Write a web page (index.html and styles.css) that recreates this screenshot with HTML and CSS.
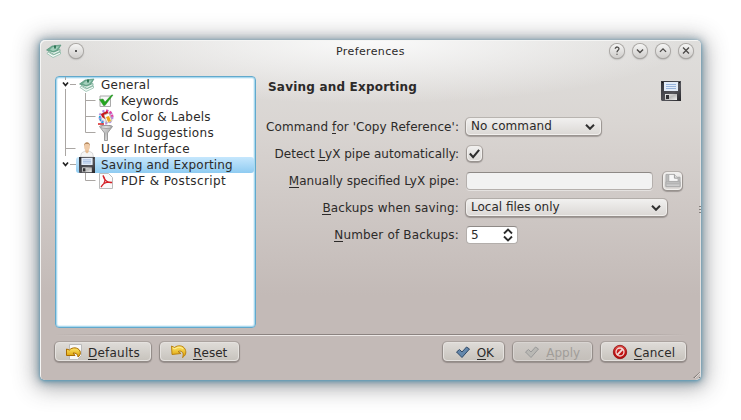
FILE: index.html
```html
<!DOCTYPE html>
<html lang="en">
<head>
<meta charset="utf-8">
<title>Preferences</title>
<link rel="stylesheet" href="styles.css">
</head>
<body>
<svg class="defs" width="0" height="0" aria-hidden="true">
  <defs>
    <linearGradient id="metal" x1="0" y1="0" x2="1" y2="1"><stop offset="0" stop-color="#eee"/><stop offset=".5" stop-color="#bbb"/><stop offset="1" stop-color="#f2f2f2"/></linearGradient>
    <linearGradient id="gold" x1="0" y1="0" x2="0" y2="1"><stop offset="0" stop-color="#ffe66a"/><stop offset="1" stop-color="#d99c00"/></linearGradient>
    <linearGradient id="red" x1="0" y1="0" x2="0" y2="1"><stop offset="0" stop-color="#df5550"/><stop offset=".5" stop-color="#c31414"/><stop offset="1" stop-color="#b50e0e"/></linearGradient>
    <linearGradient id="case" x1="0" y1="0" x2="1" y2="1"><stop offset="0" stop-color="#303036"/><stop offset=".6" stop-color="#55555b"/><stop offset="1" stop-color="#252529"/></linearGradient>
    <symbol id="books" viewBox="0 0 16 16">
      <path d="M1 10.500l6 4 7.500-3.500v-2l-7.500 3-5-3z" fill="#f6fbf8" stroke="#85b8a3" stroke-width=".7"/>
      <path d="M2 8l6 3.500 6-3v-2L8 9 2 6z" fill="#e7f3ed" stroke="#5d9d82" stroke-width=".7"/>
      <path d="M.5 7L6 3l9-1-3 5-5 2z" fill="#6eac91" stroke="#4d8f73" stroke-width=".6"/>
      <path d="M4 6.500L7 4l6-.7-3 3.700-3 1z" fill="#a5d0bd"/><path d="M9 2.500v3" stroke="#17603f" stroke-width="1.500"/>
    </symbol>
    <symbol id="floppy" viewBox="0 0 20 20">
      <path d="M0 0h20v20H1l-1-1z" fill="url(#case)"/>
      <path d="M3 1h14v9H3z" fill="#e3ecf8"/><path d="M5 3.500h10M5 5.500h10M5 7.500h10" stroke="#98b4dc"/>
      <path d="M4 13h12v6H4z" fill="url(#metal)"/><path d="M5 14h3v4H5z" fill="#303034"/><path d="M1 1.500h1M18 1.500h1" stroke="#111"/>
    </symbol>
    <symbol id="tick" viewBox="0 0 16 16"><path d="M1.500 8l3-2.500 2.500 2.500 4.500-5 3 2L7 13.500z" stroke-linejoin="round"/></symbol>
    <symbol id="undo" viewBox="0 0 16 14"><path d="M.5 1l3 1.500C7-.2 12 .3 14 4c2 4 0 7-2.500 8.500C13 9 12 6.500 9 6l-2 .5 3 2-9 1z" fill="url(#gold)" stroke="#b67c08" stroke-width=".9" stroke-linejoin="round"/><path d="M2 3l2 1c3-2.500 6-2 8 0" fill="none" stroke="#fff09a"/></symbol>
    <symbol id="down" viewBox="0 0 10 6"><path d="M1 .8l4 4 4-4" fill="none" stroke="#303030" stroke-width="2"/></symbol>
  </defs>
</svg>

<main class="window">
  <header class="titlebar">
    <svg class="app-icon"><use href="#books"/></svg>
    <span class="orb"><i class="dot"></i></span>
    <h1 class="title"><span class="t-title">Preferences</span></h1>
    <div class="controls">
      <span class="orb"><svg viewBox="0 0 16 16"><path d="M6 5.500c.2-3 4.500-2.500 4.200.2C10 7.300 8 7.200 8 9.500M8 11v1.300"/></svg></span>
      <span class="orb"><svg viewBox="0 0 16 16"><path d="M4.500 6.300L8 9.800l3.500-3.500"/></svg></span>
      <span class="orb"><svg viewBox="0 0 16 16"><path d="M4.500 9L8 5.500 11.500 9"/></svg></span>
      <span class="orb"><svg viewBox="0 0 16 16"><path d="M4.600 4.100l6.800 6.800M11.400 4.100l-6.800 6.800"/></svg></span>
    </div>
  </header>

  <div class="content">
    <nav class="tree">
      <svg class="lines" viewBox="0 0 60 112"><path d="M9.500 0v3M9.500 12v67M14 7.500h6M9.500 71.500h10M29.500 16v39.500h10M29.500 23.500h10M29.500 39.500h10M14 87.500h6M29.500 96v7.500h10"/><path class="arrow" d="M7 5.500l2.500 3 2.500-3M7 85.500l2.500 3 2.500-3"/></svg>
      <div class="node"><svg><use href="#books"/></svg><span class="t-general">General</span></div>
      <div class="node child"><svg viewBox="0 0 16 16"><path d="M2 3h10.500v10.500H2z" fill="#f7f7f7" stroke="#aaa"/><path d="M1.500 6.500L5 6l2 3 6.500-7H15L7 12.500H5.500z" fill="#25a51e" stroke="#2a8d2c" stroke-width=".5"/></svg><span class="t-keywords">Keywords</span></div>
      <div class="node child"><svg viewBox="0 0 16 16"><circle cx="8" cy="8" r="6" fill="#eee" stroke="#b48be0" stroke-width="3" stroke-dasharray="2 2"/><path d="M8 2a6 6 0 0 1 6 6" fill="none" stroke="#e243a1" stroke-width="3" stroke-dasharray="2 1.500"/><path d="M2 7a6 6 0 0 0 4 7" fill="none" stroke="#29a8d8" stroke-width="2" stroke-dasharray="2 1"/><path d="M3 5l6-3 2 3-4 5-3-2z" fill="#c91818"/><path d="M6 6l5-2 3 8-5 2z" fill="#fff" stroke="#b5a996" stroke-width=".7"/><path d="M8 8l3-1 2 5-3 1z" fill="#eea51d"/><path d="M0 15h6" stroke="#d42222" stroke-width="1.500"/></svg><span class="t-color">Color &amp; Labels</span></div>
      <div class="node child"><svg viewBox="0 0 16 16"><path d="M1.500 1.500C2-.2 14-.2 14.500 1.500L9.500 8v7.500h-3V8z" fill="url(#metal)" stroke="#888" stroke-width=".8"/><ellipse cx="8" cy="2" rx="5.500" ry="1.200" fill="#fafafa" stroke="#777" stroke-width=".7"/></svg><span class="t-id">Id Suggestions</span></div>
      <div class="node"><svg viewBox="0 0 16 16"><path d="M1.500 16l1-4 3.500-2h4l3.500 2 1 4z" fill="#f5f5f5" stroke="#ccc" stroke-width=".7"/><path d="M6.300 8h3.400v3L8 12.500 6.300 11z" fill="#e4b98e"/><ellipse cx="8" cy="5.500" rx="2.900" ry="4" fill="#efcba8"/><path d="M5.200 5C4.500 0 11.500 0 10.800 5L9.700 3H6.300z" fill="#b98d62"/></svg><span class="t-user">User Interface</span></div>
      <div class="node selected"><svg><use href="#floppy"/></svg><span class="t-saving">Saving and Exporting</span></div>
      <div class="node child"><svg viewBox="0 0 16 16"><path d="M1.500.5h9l4 4v11h-13z" fill="#fafafa" stroke="#bbb"/><path d="M3 14C7 10.500 8 6 5 2.500 6.500 8 10 10 14 9.500 9 8.500 5 10.500 3 14z" fill="none" stroke="#d41f26" stroke-width="1.300"/></svg><span class="t-pdf">PDF &amp; Postscript</span></div>
    </nav>

    <section class="page">
      <div class="page-head"><h2><span class="t-head">Saving and Exporting</span></h2><svg class="page-icon"><use href="#floppy"/></svg></div>
      <div class="form">
        <label><span class="t-command">Command <u>f</u>or 'Copy Reference':</span></label>
        <div class="combo short"><span class="t-nocommand">No command</span><svg><use href="#down"/></svg></div>
        <label><span class="t-detect">Detect <u>L</u>yX pipe automatically:</span></label>
        <div class="check"><svg viewBox="0 0 14 14"><path d="M2 7l3.500 4L12 3" fill="none" stroke="#2d2d2d" stroke-width="2.200"/></svg></div>
        <label><span class="t-manual"><u>M</u>anually specified LyX pipe:</span></label>
        <div class="path"><div class="field"></div><div class="browse"><svg viewBox="0 0 16 16"><path d="M.5 14.500v-13h3v8h9v-5h3v10z" fill="#bbb" stroke="#aaa"/><path d="M3.500 9V1.500h6l4 4V9z" fill="#f7f7f7" stroke="#aaa"/><path d="M9.500 1.500v4h4" fill="#ddd" stroke="#999"/><path d="M.5 9.500h15v5H.5z" fill="#ccc" stroke="#aaa"/><path d="M1 11.500h14" stroke="#aaa"/></svg></div></div>
        <label><span class="t-backups"><u>B</u>ackups when saving:</span></label>
        <div class="combo long"><span class="t-local">Local files only</span><svg><use href="#down"/></svg></div>
        <label><span class="t-number"><u>N</u>umber of Backups:</span></label>
        <div class="spin"><span>5</span><svg viewBox="0 0 10 14"><path d="M1 5.500L5 1.500 9 5.500M1 8.500L5 12.500 9 8.500" fill="none" stroke="#2d2d2d" stroke-width="1.900"/></svg></div>
      </div>
      <div class="side-grip"></div>
    </section>
  </div>

  <footer class="footer">
    <div class="separator"></div>
    <div class="buttons">
      <div class="button defaults"><svg viewBox="0 0 16 16"><path d="M3.500.5h12v11l-4 4h-8z" fill="#f8f8f8" stroke="#bbb"/><path d="M.5 5l3 1C6 3 12 3 14 7c1 2 0 5-2 6 0-3-2-4-5-4l2 2.500H.5z" fill="url(#gold)" stroke="#a96b00" stroke-linejoin="round"/></svg><span class="t-defaults"><u>D</u>efaults</span></div>
      <div class="button reset"><svg><use href="#undo"/></svg><span class="t-reset"><u>R</u>eset</span></div>
      <div class="button ok"><svg fill="#6387ab" stroke="#2f4966"><use href="#tick"/></svg><span class="t-ok"><u>O</u>K</span></div>
      <div class="button apply"><svg fill="#b9b8b4" stroke="#999"><use href="#tick"/></svg><span class="t-apply"><u>A</u>pply</span></div>
      <div class="button cancel"><svg viewBox="0 0 16 16"><circle cx="8" cy="8" r="6.700" fill="url(#red)" stroke="#910d0d" stroke-width=".8"/><circle cx="8" cy="8" r="4" fill="none" stroke="#f3dcd9" stroke-width="1.300"/><path d="M5.200 10.800l5.600-5.600" stroke="#f3dcd9" stroke-width="1.900"/></svg><span class="t-cancel"><u>C</u>ancel</span></div>
    </div>
    <div class="corner"></div>
  </footer>
</main>
</body>
</html>
```
FILE: styles.css
```css
* { box-sizing: border-box; }
body { margin: 0; padding: 40px; width: 741px; height: 420px; overflow: hidden; background: #fff; color: #2c2a29; font: 12px/16px "DejaVu Sans", sans-serif; }
h1, h2 { margin: 0; font-size: inherit; }
svg { display: block; flex: none; }
.defs { position: absolute; }
.window { position: relative; width: 661px; height: 340px; border-radius: 5px; display: flex; flex-direction: column;
  background: radial-gradient(ellipse 320px 64px at 330px 0, #fafafa, rgba(250,250,250,0)), linear-gradient(#dfdedc 0, #dad6d3 80px, #c3bab7 255px, #c3bab7);
  box-shadow: inset 1px 1px #f5f5f4, inset -1px 0 #e3e0df, 0 1px 3px #5d9cb8, 0 1px 9px 1px rgba(90,130,150,.75), 0 3px 22px 5px rgba(50,50,55,.42); }
.titlebar { height: 36px; display: flex; padding: 3px 7px 0 6px; }
.app-icon { width: 16px; height: 16px; }
.orb { width: 14px; height: 14px; border-radius: 50%; background: linear-gradient(#f5f5f4, #cfcdcb); box-shadow: 0 0 0 1px #aaa7a4, 0 1px 2px #777; display: grid; place-items: center; }
.app-icon + .orb { margin-left: 7px; }
.orb svg { width: 14px; height: 14px; fill: none; stroke: #4b4947; stroke-width: 1.5; }
.dot { width: 2px; height: 2px; background: #555; }
.title { flex: 1; font-size: 11px; font-weight: 400; line-height: 16px; padding: 1px 0 0 253px; }
.controls { display: flex; gap: 9px; padding-right: 1px; }
.titlebar .orb { margin-top: 1px; flex: none; }
.content { display: flex; height: 252px; padding-left: 15px; }
.tree { position: relative; width: 201px; height: 252px; background: #fff; border: 1px solid #62a9cc; border-radius: 4px; box-shadow: inset 0 0 0 1px #a9d9ef, inset 0 0 0 2px #e4f3fa; }
.lines { position: absolute; left: 0; top: 0; width: 60px; height: 112px; z-index: 1; fill: none; stroke: #aaa6a3; }
.lines .arrow { stroke: #222; stroke-width: 1.7; }
.node { height: 16px; margin-left: 20px; margin-right: 1px; padding-left: 3px; display: flex; align-items: center; gap: 6px; white-space: nowrap; }
.node svg { width: 16px; height: 16px; }
.node.child { padding-left: 23px; }
.node.child svg { margin-left: -1px; margin-right: 1px; }
.selected { background: linear-gradient(#c6e7fd, #8fcbf1); border-radius: 3px; }
.page { position: relative; flex: 1; }
.page-head { height: 37px; padding: 3px 20px 0 12px; display: flex; justify-content: space-between; }
.page-icon { width: 20px; height: 20px; margin-top: 2px; }
.form { display: grid; grid-template-columns: 203px 1fr; grid-auto-rows: 27px; column-gap: 6px; align-items: center; }
.form label { text-align: right; white-space: nowrap; }
u { text-decoration: none; border-bottom: 1px solid #2c2a29; display: inline-block; height: 15px; line-height: 16px; vertical-align: top; }
.combo, .button, .browse, .check { border-radius: 4px; border: 1px solid #f1efed; background: linear-gradient(#f0efee, #dcd9d6); box-shadow: 0 0 0 1px rgba(140,134,130,.38), 0 1px 1px 1px rgba(90,84,80,.42); }
.combo { height: 17px; padding: 0 5px 0 4px; display: flex; align-items: center; justify-content: space-between; line-height: 14px; margin-left: 1px; }
.combo span { padding-bottom: 2px; }
.combo svg { width: 10px; height: 6px; }
.short { width: 135px; }
.long { width: 201px; }
.check { width: 15px; height: 15px; margin-left: 2px; }
.check svg { width: 13px; height: 13px; }
.path { display: flex; align-items: center; gap: 10px; padding-left: 1px; }
.field { width: 187px; height: 18px; border: 1px solid #b5b0ad; border-top-color: #8e8986; border-radius: 4px; background: #f2f2f2; box-shadow: 0 1px #e5e2e0; }
.browse { width: 19px; height: 18px; display: grid; place-items: center; }
.browse svg { width: 16px; height: 15px; }
.spin { width: 52px; height: 18px; border: 1px solid #b3aeab; border-top-color: #8e8986; border-radius: 4px; background: #fff; margin-left: 1px; padding: 0 4px; display: flex; align-items: center; justify-content: space-between; }
.spin svg { width: 10px; height: 14px; }
.side-grip { position: absolute; right: 0; top: 130px; width: 2px; height: 9px; background: repeating-linear-gradient(#85807d 0 1px, transparent 1px 3px); }
.footer { position: relative; padding: 6px 15px 0; }
.separator { height: 2px; background: linear-gradient(90deg, transparent, #8b8380 20%, #8b8380 80%, transparent) top/100% 1px no-repeat, linear-gradient(90deg, transparent, #ece8e6 20%, #ece8e6 80%, transparent) bottom/100% 1px no-repeat; }
.buttons { display: flex; padding-top: 6px; gap: 9px; }
.button { height: 19px; display: flex; align-items: center; background: linear-gradient(#dedbd7, #c8c4be); border-color: #e5e2df; line-height: 16px; padding-left: 10px; gap: 6px; white-space: nowrap; }
.button span { height: 16px; position: relative; top: 1px; }
.button svg { width: 16px; height: 16px; }
.defaults { width: 97px; }
.reset { width: 79px; }
.ok { width: 62px; margin-left: 195px; padding-left: 11px; }
.apply { width: 79px; color: #a19d99; background: linear-gradient(#cfcbc7, #c4bfba); border-color: #d9d5d2; }
.apply u { border-color: #a19d99; }
.cancel { width: 86px; }
.corner { position: absolute; right: 1px; bottom: -17px; width: 7px; height: 6px; background: repeating-linear-gradient(135deg, #817b77 0 1px, #ded8d5 1px 2px, transparent 2px 4px); clip-path: polygon(100% 0, 100% 100%, 0 100%); }

/* Tracking for each text run */
.t-title { letter-spacing: .38px; }
.t-head { letter-spacing: .2px; }
.t-general { letter-spacing: .25px; }
.t-color { letter-spacing: .2px; }
.t-id { letter-spacing: .34px; }
.t-user { letter-spacing: .28px; }
.t-saving { letter-spacing: .16px; }
.t-pdf { letter-spacing: .38px; }
.t-command { letter-spacing: .06px; }
.t-backups { letter-spacing: .15px; }
.t-number { letter-spacing: .17px; }
.t-nocommand { letter-spacing: .1px; }
.t-defaults { letter-spacing: .22px; }
.t-cancel { letter-spacing: .15px; }
```
